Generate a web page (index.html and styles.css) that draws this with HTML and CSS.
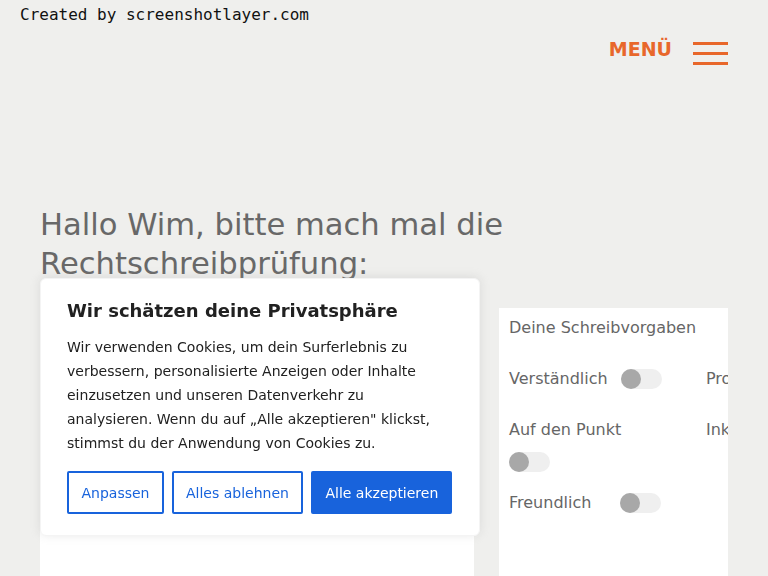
FILE: index.html
```html
<!DOCTYPE html>
<html lang="de">
<head>
    <meta charset="utf-8">
    <link rel="stylesheet" href="styles.css">
</head>
<body>
    <div class="stamp">Created by screenshotlayer.com</div>

    <header class="topbar">
        <div class="menu">
            <span class="menu-label">MENÜ</span>
            <span class="burger"><i></i><i></i><i></i></span>
        </div>
    </header>

    <main class="page">
        <h1 class="headline">Hallo Wim, bitte mach mal die Rechtschreibprüfung:</h1>

        <div class="workspace">
            <div class="editor"></div>

            <aside class="prefs">
                <div class="prefs-title">Deine Schreibvorgaben</div>
                <div class="opts">
                    <div class="opt first-row"><span class="opt-label">Verständlich</span><span class="toggle"></span></div>
                    <div class="opt first-row"><span class="opt-label">Professionell</span><span class="toggle"></span></div>
                    <div class="opt"><span class="opt-label">Auf den Punkt</span><span class="toggle"></span></div>
                    <div class="opt"><span class="opt-label">Inklusiv</span><span class="toggle"></span></div>
                    <div class="opt"><span class="opt-label">Freundlich</span><span class="toggle"></span></div>
                </div>
            </aside>
        </div>
    </main>

    <div class="consent">
        <div class="consent-title">Wir schätzen deine Privatsphäre</div>
        <p class="consent-text">Wir verwenden Cookies, um dein Surferlebnis zu verbessern, personalisierte Anzeigen oder Inhalte einzusetzen und unseren Datenverkehr zu analysieren. Wenn du auf „Alle akzeptieren" klickst, stimmst du der Anwendung von Cookies zu.</p>
        <div class="consent-btns">
            <button class="btn btn-outline">Anpassen</button>
            <button class="btn btn-outline">Alles ablehnen</button>
            <button class="btn btn-solid">Alle akzeptieren</button>
        </div>
    </div>
</body>
</html>
```

FILE: styles.css
```css
body {
    margin: 0;
    background: #efefed;
    font-family: 'DejaVu Sans', sans-serif;
    color: #666;
    overflow: hidden;
}

.stamp {
    position: absolute;
    top: 5px;
    left: 20px;
    font-family: 'DejaVu Sans Mono', monospace;
    font-size: 16px;
    color: #111;
}

.topbar {
    display: flex;
    justify-content: flex-end;
    padding: 38px 40px 0 40px;
}

.menu {
    display: flex;
    align-items: center;
    gap: 21px;
}

.menu-label {
    margin-bottom: 8px;
    font-size: 19px;
    font-weight: bold;
    color: #e8672b;
    line-height: 22px;
}

.burger {
    display: flex;
    flex-direction: column;
    gap: 7px;
    width: 35px;
}

.burger i {
    display: block;
    height: 3px;
    background: #e8672b;
}

.page {
    padding: 0 40px;
}

.headline {
    margin: 137px 0 0 0;
    font-size: 30.6px;
    font-weight: normal;
    line-height: 39px;
    color: #686868;
}

.workspace {
    display: grid;
    grid-template-columns: 434px 229px;
    column-gap: 25px;
    margin-top: 25px;
}

.editor {
    background: #fff;
    min-height: 320px;
}

.prefs {
    background: #fff;
    min-height: 320px;
    padding: 9px 10px;
    overflow: hidden;
    font-size: 16px;
    line-height: 22px;
}

.opts {
    display: grid;
    grid-template-columns: 160px 160px;
    column-gap: 37px;
    row-gap: 20px;
    margin-top: 29px;
}

.opt {
    display: flex;
    flex-wrap: wrap;
    align-items: center;
    align-content: flex-start;
    row-gap: 11px;
}

.opt.first-row {
    margin-bottom: 9px;
}

.opt-label {
    min-width: 98px;
    margin-right: 13px;
    white-space: nowrap;
}

.toggle {
    position: relative;
    width: 41px;
    height: 20px;
    border-radius: 10px;
    background: #efefef;
}

.toggle::before {
    content: '';
    position: absolute;
    left: 0;
    top: 0;
    width: 20px;
    height: 20px;
    border-radius: 50%;
    background: #a8a8a8;
}

/* cookie banner */
.consent {
    position: fixed;
    left: 40px;
    bottom: 40px;
    width: 440px;
    box-sizing: border-box;
    padding: 20px 26px 21px 26px;
    background: #fff;
    border: 1px solid #f4f4f4;
    border-radius: 6px;
    box-shadow: 0 -1px 10px 0 rgba(172, 171, 171, 0.3);
    color: #212121;
}

.consent-title {
    font-size: 18px;
    font-weight: bold;
    line-height: 24px;
}

.consent-text {
    margin: 12px 0 0 0;
    font-size: 14px;
    line-height: 24px;
}

.consent-btns {
    display: flex;
    gap: 8px;
    margin-top: 16px;
}

.btn {
    flex-shrink: 0;
    height: 43px;
    padding: 0 12px 0 12.5px;
    border: 2px solid #1863dc;
    border-radius: 2px;
    font-family: 'DejaVu Sans', sans-serif;
    font-size: 14px;
    white-space: nowrap;
}

.btn-outline {
    background: #fff;
    color: #1863dc;
}

.btn-solid {
    background: #1863dc;
    color: #fff;
}
```
